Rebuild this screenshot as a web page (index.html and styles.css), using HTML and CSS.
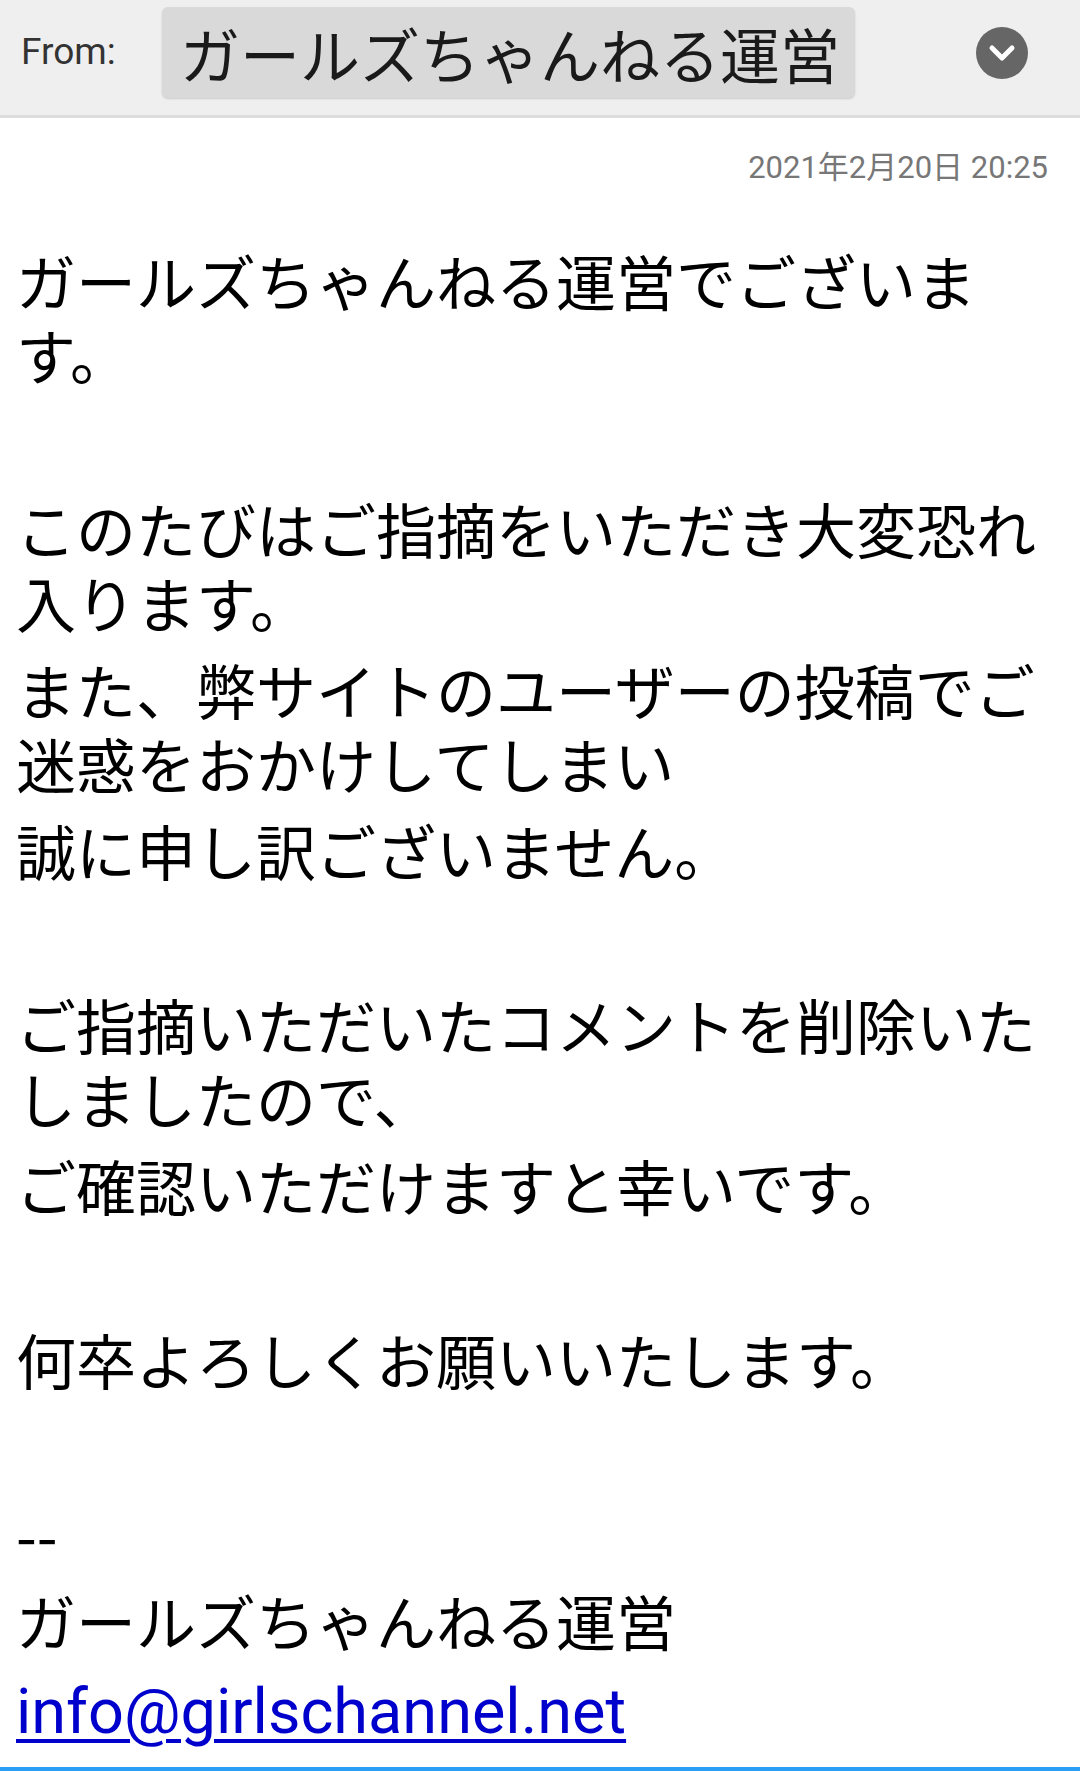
FILE: index.html
```html
<!DOCTYPE html>
<html lang="ja">
<head>
<meta charset="utf-8">
<title>メール</title>
<link rel="stylesheet" href="styles.css">
</head>
<body>
<div class="header">
  <span class="from-label">From:</span>
  <span class="sender-chip">ガールズちゃんねる運営</span>
  <span class="spacer"></span>
  <span class="expand-btn">
    <svg width="52" height="52" viewBox="0 0 52 52">
      <circle cx="26" cy="26" r="26" fill="#666666"/>
      <path d="M16 21 L26 31 L36 21" fill="none" stroke="#ffffff" stroke-width="5" stroke-linecap="round" stroke-linejoin="round"/>
    </svg>
  </span>
</div>
<div class="mail">
  <div class="date">2021年2月20日 20:25</div>
  <div class="body">
    <p class="ln">ガールズちゃんねる運営でございます。</p>
    <p class="ln">&nbsp;</p>
    <p class="ln">このたびはご指摘をいただき大変恐れ入ります。</p>
    <p class="ln">また、弊サイトのユーザーの投稿でご迷惑をおかけしてしまい</p>
    <p class="ln">誠に申し訳ございません。</p>
    <p class="ln">&nbsp;</p>
    <p class="ln">ご指摘いただいたコメントを削除いたしましたので、</p>
    <p class="ln">ご確認いただけますと幸いです。</p>
    <p class="ln">&nbsp;</p>
    <p class="ln">何卒よろしくお願いいたします。</p>
    <p class="ln">&nbsp;</p>
    <p class="ln">--</p>
    <p class="ln">ガールズちゃんねる運営</p>
    <p class="ln"><a class="mail-link" href="mailto:info@girlschannel.net">info@girlschannel.net</a></p>
  </div>
</div>
<div class="bottom-bar"></div>
</body>
</html>
```

FILE: styles.css
```css
html, body {
  margin: 0;
  padding: 0;
}
body {
  width: 1080px;
  height: 1771px;
  background: #ffffff;
  font-family: Roboto, "Noto Sans CJK JP", sans-serif;
  color: #111111;
  overflow: hidden;
  position: relative;
}
.header {
  height: 115px;
  background: #efefef;
  border-bottom: 3px solid #dcdcdc;
  display: flex;
  align-items: center;
  padding: 0 52px 0 21px;
  box-sizing: content-box;
}
.from-label {
  font-size: 37px;
  color: #333333;
  width: 141px;
  flex: none;
  margin-top: -12px;
}
.sender-chip {
  background: #d9d9d9;
  border-radius: 6px;
  height: 91px;
  margin-top: -10px;
  padding: 0 15px 0 18px;
  display: flex;
  align-items: center;
  font-family: "Noto Sans CJK JP", sans-serif;
  font-size: 60px;
  color: #1a1a1a;
  box-shadow: 0 1px 2px rgba(0,0,0,0.15);
  line-height: 1;
}
.spacer {
  flex: 1;
}
.expand-btn {
  width: 52px;
  height: 52px;
  display: flex;
  margin-top: -10px;
}
.mail {
  padding: 0 16px;
}
.date {
  margin-top: 30px;
  height: 40px;
  line-height: 40px;
  text-align: right;
  font-size: 31px;
  color: #777777;
  padding-right: 16px;
}
.body {
  margin-top: 55px;
  font-family: "Noto Sans CJK JP", sans-serif;
  font-size: 60px;
  line-height: 74px;
  color: #000000;
}
.ln {
  margin: 0;
  padding-bottom: 13px;
}
.mail-link {
  font-family: Roboto, sans-serif;
  font-size: 63px;
  color: #0000cc;
  text-decoration: underline;
  text-decoration-thickness: 4px;
  text-underline-offset: 6px;
}
.bottom-bar {
  position: absolute;
  left: 0;
  right: 0;
  bottom: 0;
  height: 4px;
  background: #2a9df4;
}
```
